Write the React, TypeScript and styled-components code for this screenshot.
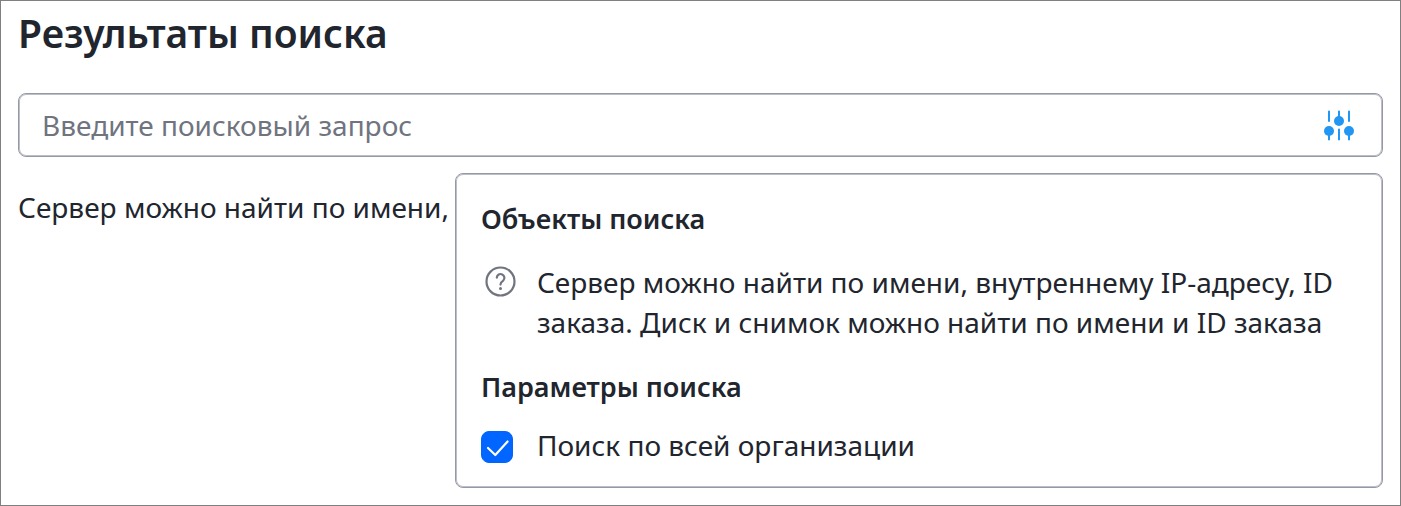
import React from "react";
import styled, { createGlobalStyle } from "styled-components";

const GlobalStyle = createGlobalStyle`
  *, *::before, *::after { box-sizing: border-box; }
  body {
    margin: 0;
    background: #fff;
    color: #21252e;
    font-family: "Noto Sans", sans-serif;
    font-size: 28px;
    line-height: 40px;
  }
`;

const Page = styled.main`
  min-height: 100vh;
  border: 1px solid #808080;
  padding: 8px 17px 16px;
`;

const Title = styled.h1`
  margin: 0;
  font-size: 39px;
  line-height: 48px;
  font-weight: 600;
`;

const SearchBar = styled.form`
  display: flex;
  align-items: center;
  height: 64px;
  margin-top: 36px;
  padding: 0 27px 0 23px;
  border: 1px solid #9599a6;
  border-radius: 8px;
  box-shadow: inset 0 0 0 1px #bcbfc8;
`;

const SearchInput = styled.input`
  flex: 1;
  min-width: 0;
  padding: 0;
  border: 0;
  outline: 0;
  background: transparent;
  color: inherit;
  font: inherit;
  &::placeholder { color: #70747f; opacity: 1; }
`;

const IconButton = styled.button`
  display: flex;
  padding: 0;
  border: 0;
  background: none;
  color: #2196f3;
  cursor: pointer;
`;

const Results = styled.div`
  display: flex;
  align-items: flex-start;
  gap: 6px;
  margin-top: 16px;
`;

const Summary = styled.p`
  flex: none;
  margin: 0;
  padding-top: 14px;
`;

const Panel = styled.section`
  flex: 1;
  min-width: 0;
  padding: 25px 25px 24px;
  border: 1px solid #9599a6;
  border-radius: 8px;
  box-shadow: inset 0 0 0 1px #bcbfc8;
`;

const PanelTitle = styled.h2`
  margin: 0;
  font-size: 27px;
  line-height: 40px;
  font-weight: 600;
`;

const Hint = styled.div`
  display: flex;
  gap: 20px;
  margin: 23px 0 25px;
`;

const HintIcon = styled.svg`
  flex: none;
  width: 36px;
  height: 36px;
  color: #70747f;
`;

const HintText = styled.p`
  margin: 0;
`;

const Option = styled.label`
  display: flex;
  align-items: flex-start;
  gap: 24px;
  margin-top: 20px;
  line-height: 36px;
`;

const TickBox = styled.span`
  display: grid;
  flex: none;
  width: 32px;
  height: 32px;
  margin-top: 4px;
  & > * { grid-area: 1 / 1; }
`;

const Tick = styled.input`
  appearance: none;
  width: 32px;
  height: 32px;
  margin: 0;
  border: 1px solid #0066ff;
  border-radius: 8px;
  background: #fff;
  &:checked { background: #0066ff; }
`;

const TickMark = styled.svg`
  width: 32px;
  height: 32px;
  pointer-events: none;
`;

function SlidersIcon() {
  return (
    <svg width="32" height="32" viewBox="0 0 32 32" aria-hidden="true">
      <g stroke="currentColor" strokeWidth="2" strokeLinecap="round" fill="none">
        <path d="M6 2.5v9.5M6 21v9.5M16 2.5v9.5M16 20.5v10M26 2.5v9.5M26 21v9.5" />
      </g>
      <g fill="currentColor">
        <circle cx="6" cy="22" r="5" />
        <circle cx="16" cy="12" r="5" />
        <circle cx="26" cy="22" r="5" />
      </g>
    </svg>
  );
}

export default function App() {
  return (
    <>
      <GlobalStyle />
      <Page>
        <Title>Результаты поиска</Title>
        <SearchBar role="search">
          <SearchInput type="text" aria-label="Поиск" placeholder="Введите поисковый запрос" />
          <IconButton type="button" aria-label="Параметры поиска">
            <SlidersIcon />
          </IconButton>
        </SearchBar>
        <Results>
          <Summary>Сервер можно найти по имени,</Summary>
          <Panel>
            <PanelTitle>Объекты поиска</PanelTitle>
            <Hint>
              <HintIcon viewBox="0 0 36 36" fill="none" stroke="currentColor" aria-hidden="true">
                <circle cx="19.5" cy="19.5" r="14" strokeWidth="2.2" />
                <path d="M15.8 15.6a3.8 3.8 0 1 1 6.4 3q-2.7 1.7-2.7 4" strokeWidth="2.2" strokeLinecap="round" />
                <circle cx="19.5" cy="26.6" r="1.5" fill="currentColor" stroke="none" />
              </HintIcon>
              <HintText>
                Сервер можно найти по имени, внутреннему IP-адресу, ID заказа. Диск и снимок можно найти по имени и ID заказа
              </HintText>
            </Hint>
            <PanelTitle>Параметры поиска</PanelTitle>
            <Option>
              <TickBox>
                <Tick type="checkbox" defaultChecked />
                <TickMark viewBox="0 0 32 32" fill="none" aria-hidden="true">
                  <path d="M7 17l7.3 7L26.6 10.5" stroke="#fff" strokeWidth="2.2" strokeLinecap="round" strokeLinejoin="round" />
                </TickMark>
              </TickBox>
              Поиск по всей организации
            </Option>
          </Panel>
        </Results>
      </Page>
    </>
  );
}
